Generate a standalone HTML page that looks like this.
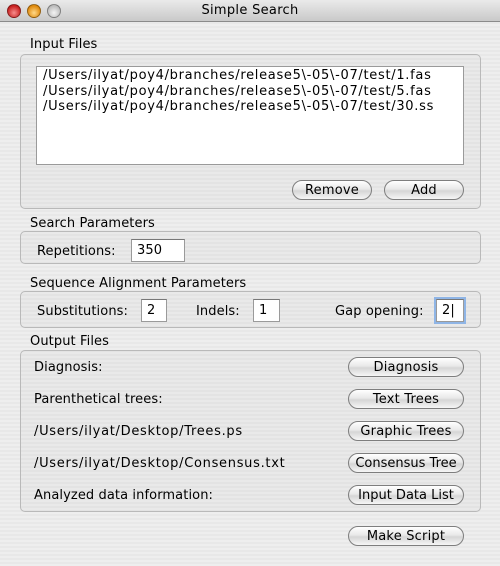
<!DOCTYPE html>
<html><head><style>
*{margin:0;padding:0;box-sizing:border-box}
body{width:500px;height:566px;overflow:hidden;font-family:"DejaVu Sans","Liberation Sans",sans-serif;font-size:13px;letter-spacing:.1px;color:#000;position:relative;
background:repeating-linear-gradient(#eeeeee 0 2px,#e8e8e8 2px 4px);}
.a{position:absolute;white-space:nowrap;margin-top:1px}
.p{letter-spacing:.7px}
.title{position:absolute;left:0;top:0;width:500px;height:22px;background:linear-gradient(#eaeaea,#c9c9c9);border-bottom:1px solid #8a8a8a;text-align:center;line-height:22px;font-size:13px;letter-spacing:.3px}
.light{position:absolute;top:4px;width:14px;height:14px;border-radius:50%;border:1px solid rgba(0,0,0,.35)}
.box{position:absolute;border:1px solid #b9b9b9;border-radius:5px;background:rgba(0,0,0,.02)}
.btn{position:absolute;height:20px;border:1px solid #7e7e7e;border-radius:10px;background:linear-gradient(#ffffff 0%,#e8e8e8 45%,#d6d6d6 55%,#f6f6f6 100%);text-align:center;line-height:19px;font-size:13px;letter-spacing:.2px}
.fld{position:absolute;background:#fff;border:1px solid #9a9a9a;border-top-color:#777;height:23px;line-height:22px;padding-left:5px}
</style></head><body>
<div class="title">Simple Search</div>
<div class="light" style="left:7px;background:radial-gradient(circle at 50% 65%,#f78d8d,#c8201f 70%)"></div>
<div class="light" style="left:27px;background:radial-gradient(circle at 50% 65%,#ffd98a,#e08a0c 70%)"></div>
<div class="light" style="left:47px;background:radial-gradient(circle at 50% 65%,#f4f4f4,#bcbcbc 70%)"></div>

<div class="a" style="left:30px;top:36px">Input Files</div>
<div class="box" style="left:20px;top:54px;width:461px;height:155px"></div>
<div class="a" style="left:36px;top:65px;width:428px;height:99px;background:#fff;border:1px solid #9a9a9a"></div>
<div class="a p" style="left:43px;top:67px;line-height:15.5px">/Users/ilyat/poy4/branches/release5\-05\-07/test/1.fas<br>/Users/ilyat/poy4/branches/release5\-05\-07/test/5.fas<br>/Users/ilyat/poy4/branches/release5\-05\-07/test/30.ss</div>
<div class="btn" style="left:292px;top:180px;width:80px">Remove</div>
<div class="btn" style="left:384px;top:180px;width:80px">Add</div>

<div class="a" style="left:30px;top:215px">Search Parameters</div>
<div class="box" style="left:20px;top:231px;width:461px;height:33px"></div>
<div class="a" style="left:37px;top:243px">Repetitions:</div>
<div class="fld" style="left:131px;top:239px;width:54px">350</div>

<div class="a" style="left:30px;top:275px">Sequence Alignment Parameters</div>
<div class="box" style="left:20px;top:291px;width:461px;height:37px"></div>
<div class="a" style="left:37px;top:303px">Substitutions:</div>
<div class="fld" style="left:141px;top:299px;width:26px">2</div>
<div class="a" style="left:196px;top:303px">Indels:</div>
<div class="fld" style="left:253px;top:299px;width:27px">1</div>
<div class="a" style="left:335px;top:303px">Gap opening:</div>
<div class="fld" style="left:436px;top:299px;width:28px;box-shadow:0 0 0 2px #8fb5e6">2|</div>

<div class="a" style="left:30px;top:333px">Output Files</div>
<div class="box" style="left:20px;top:350px;width:461px;height:162px"></div>
<div class="a" style="left:34px;top:359px">Diagnosis:</div>
<div class="btn" style="left:348px;top:357px;width:116px">Diagnosis</div>
<div class="a" style="left:34px;top:391px">Parenthetical trees:</div>
<div class="btn" style="left:348px;top:389px;width:116px">Text Trees</div>
<div class="a p" style="left:34px;top:423px">/Users/ilyat/Desktop/Trees.ps</div>
<div class="btn" style="left:348px;top:421px;width:116px">Graphic Trees</div>
<div class="a p" style="left:34px;top:455px">/Users/ilyat/Desktop/Consensus.txt</div>
<div class="btn" style="left:348px;top:453px;width:116px;letter-spacing:0">Consensus Tree</div>
<div class="a" style="left:34px;top:487px">Analyzed data information:</div>
<div class="btn" style="left:348px;top:485px;width:116px;letter-spacing:0">Input Data List</div>

<div class="btn" style="left:348px;top:526px;width:116px">Make Script</div>
</body></html>
